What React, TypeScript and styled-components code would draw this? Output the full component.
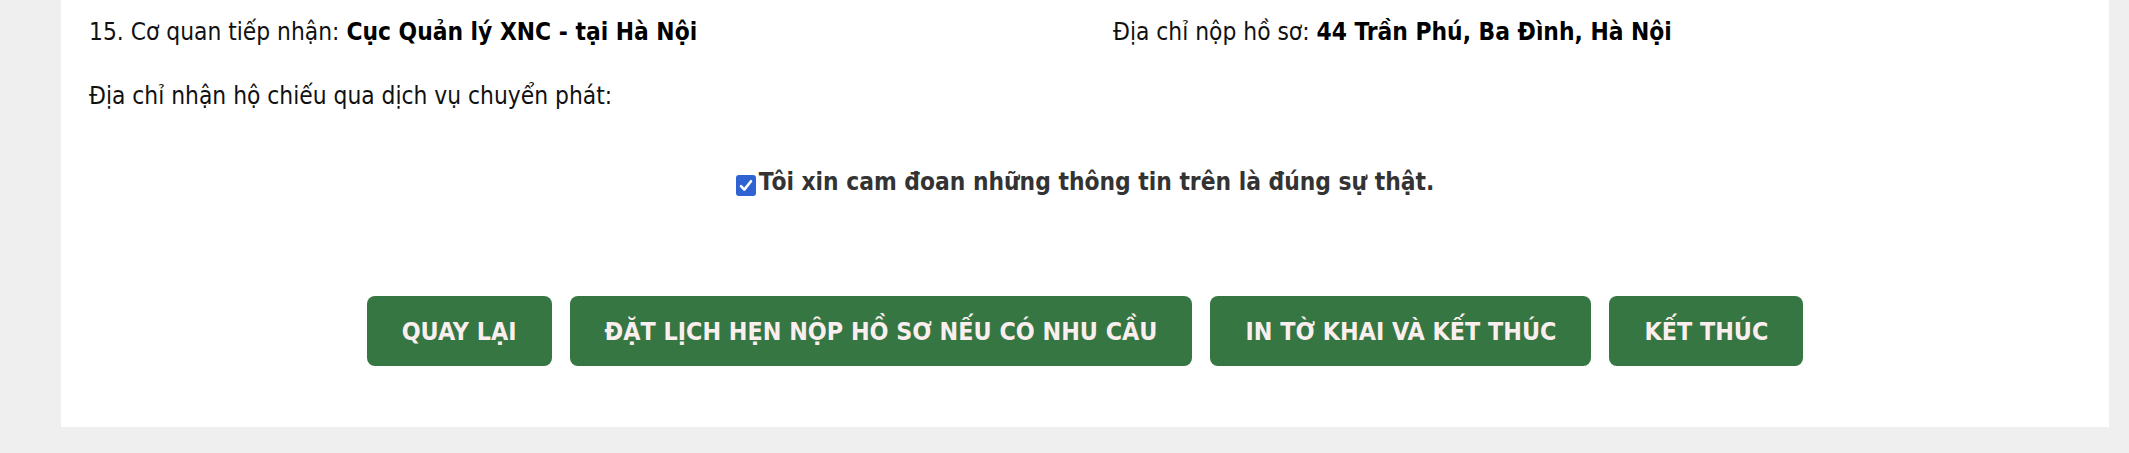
import React, { useState } from "react";
import styled, { createGlobalStyle } from "styled-components";

const GlobalStyle = createGlobalStyle`
  html, body { margin: 0; padding: 0; }
  body {
    background: #efefef;
    font-family: "DejaVu Sans Condensed", "DejaVu Sans", sans-serif;
  }
`;

const Page = styled.div`
  padding: 0 20px 26px 61px;
`;

const Panel = styled.section`
  background: #ffffff;
  padding: 14px 0 61px;
`;

const InfoRow = styled.div`
  display: grid;
  grid-template-columns: 1fr 1fr;
`;

const Field = styled.p<{ $top?: number }>`
  margin: ${(p) => p.$top ?? 0}px 0 0;
  padding-left: 28px;
  font-size: 24.3px;
  line-height: 36px;
  color: #111111;
  white-space: nowrap;
`;

const Strong = styled.b`
  font-weight: 700;
  color: #000000;
`;

const Pledge = styled.label`
  margin-top: 50px;
  display: flex;
  justify-content: center;
  align-items: flex-start;
  font-size: 24.3px;
  line-height: 36px;
  font-weight: 700;
  color: #333333;
  cursor: pointer;
`;

const HiddenInput = styled.input`
  position: absolute;
  opacity: 0;
  width: 0;
  height: 0;
`;

const Box = styled.span<{ $on: boolean }>`
  width: 20px;
  height: 21px;
  margin: 11px 3px 0 0;
  border-radius: 3px;
  background: ${(p) => (p.$on ? "#2f62d3" : "#ffffff")};
  border: ${(p) => (p.$on ? "none" : "1px solid #767676")};
  box-sizing: border-box;
  display: flex;
  align-items: center;
  justify-content: center;
  flex: none;
`;

const Actions = styled.div`
  margin-top: 96px;
  display: flex;
  justify-content: center;
  gap: 18px;
`;

const ActionButton = styled.button`
  height: 70px;
  padding: 0 35px;
  border: none;
  border-radius: 8px;
  background: #357642;
  color: #faeeee;
  font-family: "DejaVu Sans Condensed", "DejaVu Sans", sans-serif;
  font-size: 24.8px;
  font-weight: 700;
  white-space: nowrap;
  cursor: pointer;
`;

export default function App() {
  const [agreed, setAgreed] = useState(true);
  return (
    <>
      <GlobalStyle />
      <Page>
        <Panel>
          <InfoRow>
            <Field>
              15. Cơ quan tiếp nhận: <Strong>Cục Quản lý XNC - tại Hà Nội</Strong>
            </Field>
            <Field>
              Địa chỉ nộp hồ sơ: <Strong>44 Trần Phú, Ba Đình, Hà Nội</Strong>
            </Field>
          </InfoRow>
          <Field $top={28}>Địa chỉ nhận hộ chiếu qua dịch vụ chuyển phát:</Field>
          <Pledge>
            <HiddenInput
              type="checkbox"
              checked={agreed}
              onChange={(e) => setAgreed(e.target.checked)}
            />
            <Box $on={agreed}>
              {agreed && (
                <svg width="14" height="13" viewBox="0 0 14 13">
                  <path
                    d="M2 7.2 L5.3 10.6 L12 2.2"
                    fill="none"
                    stroke="#ffffff"
                    strokeWidth="2.6"
                    strokeLinecap="round"
                    strokeLinejoin="round"
                  />
                </svg>
              )}
            </Box>
            Tôi xin cam đoan những thông tin trên là đúng sự thật.
          </Pledge>
          <Actions>
            <ActionButton>QUAY LẠI</ActionButton>
            <ActionButton>ĐẶT LỊCH HẸN NỘP HỒ SƠ NẾU CÓ NHU CẦU</ActionButton>
            <ActionButton>IN TỜ KHAI VÀ KẾT THÚC</ActionButton>
            <ActionButton>KẾT THÚC</ActionButton>
          </Actions>
        </Panel>
      </Page>
    </>
  );
}
